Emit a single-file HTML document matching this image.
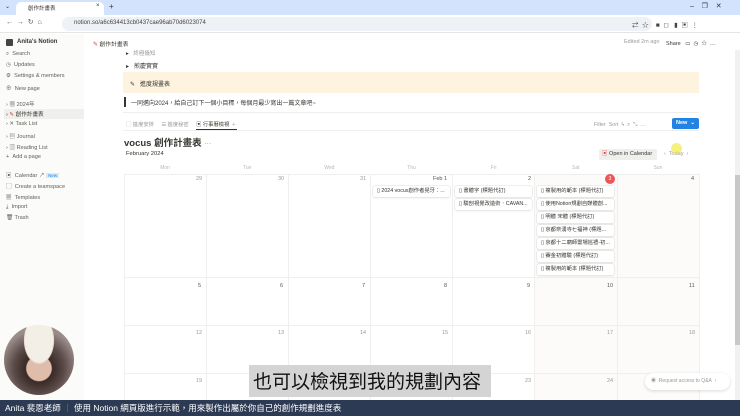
<!DOCTYPE html><html><head><meta charset="utf-8"><style>
*{box-sizing:border-box;margin:0;padding:0}
body{width:740px;height:416px;overflow:hidden;background:#fff;font-family:"Liberation Sans","Noto Sans CJK TC",sans-serif;color:#37352f;position:relative;font-size:6px}
.a{position:absolute}
.g{color:#9b9a97}
.card{position:absolute;height:11px;background:#fff;box-shadow:0 0 0 0.5px #ddd,0 1px 2px rgba(0,0,0,.08);border-radius:2px;font-size:5.3px;line-height:11px;padding-left:4px;white-space:nowrap;overflow:hidden;width:77px}
.num{position:absolute;font-size:5.5px;color:#9b9a97}
.sb{position:absolute;left:6px;font-size:5.6px;color:#5f5e5b}
.vl{position:absolute;top:174px;width:1px;height:226px;background:#efefed}
.hl{position:absolute;left:124px;width:575px;height:1px;background:#efefed}
</style></head><body>
<div class="a" style="left:0;top:0;width:740px;height:15px;background:#d3e3fd"></div>
<div class="a" style="left:16px;top:2px;width:88px;height:13px;background:#fff;border-radius:5px 5px 0 0"></div>
<div class="a" style="left:28px;top:4px;font-size:5.5px">創作計畫表</div>
<div class="a" style="left:96px;top:3px;font-size:6px">×</div>
<div class="a" style="left:109px;top:2px;font-size:8px">+</div>
<div class="a" style="left:5px;top:3px;font-size:6px">⌄</div>
<div class="a" style="left:690px;top:2px;font-size:7px">–&nbsp;&nbsp;&nbsp;&nbsp;❐&nbsp;&nbsp;&nbsp;&nbsp;✕</div>
<div class="a" style="left:0;top:15px;width:740px;height:18px;background:#fff;border-bottom:1px solid #e5e5e5"></div>
<div class="a" style="left:6px;top:18px;font-size:7px;color:#555">←&nbsp;&nbsp;→&nbsp;&nbsp;↻&nbsp;&nbsp;⌂</div>
<div class="a" style="left:62px;top:17px;width:590px;height:14px;background:#eef1f6;border-radius:7px"></div>
<div class="a" style="left:74px;top:20px;font-size:6px;color:#444">notion.so/a6c634413cb0437cae96ab70d6023074</div>
<div class="a" style="left:632px;top:19px;font-size:6.5px;color:#444">⇄&nbsp;&nbsp;☆&nbsp;&nbsp;&nbsp;&nbsp;■&nbsp;&nbsp;◻&nbsp;&nbsp;&nbsp;▮&nbsp;&nbsp;▣&nbsp;&nbsp;⋮</div>
<div class="a" style="left:0;top:34px;width:84px;height:366px;background:#fbfbfa"></div>
<div class="a" style="left:6px;top:39px;width:7px;height:7px;background:#444;border-radius:1px"></div>
<div class="a" style="left:17px;top:39px;font-size:6px;font-weight:bold">Anita's Notion</div>
<div class="sb" style="top:51px">⌕ &nbsp;Search</div>
<div class="sb" style="top:62px">◷ &nbsp;Updates</div>
<div class="sb" style="top:73px">⚙ &nbsp;Settings &amp; members</div>
<div class="sb" style="top:84px">⊕ &nbsp;New page</div>
<div class="sb" style="top:100px">› ▦ 2024年</div>
<div class="a" style="left:4px;top:109px;width:80px;height:10px;background:#efefed"></div>
<div class="sb" style="top:110px;color:#37352f">› <span style="color:#c44">✎</span> 創作計畫表</div>
<div class="sb" style="top:121px">› ✕ Task List</div>
<div class="sb" style="top:132px">› ▤ Journal</div>
<div class="sb" style="top:143px">› ▥ Reading List</div>
<div class="sb" style="top:154px">+ &nbsp;Add a page</div>
<div class="sb" style="top:171px">▣ &nbsp;Calendar ↗ <span style="background:#ddebf1;color:#2383e2;font-size:4.5px;padding:0 2px">New</span></div>
<div class="sb" style="top:182px">▢ &nbsp;Create a teamspace</div>
<div class="sb" style="top:193px">▦ &nbsp;Templates</div>
<div class="sb" style="top:204px">⤓ &nbsp;Import</div>
<div class="sb" style="top:215px">🗑 Trash</div>
<div class="a" style="left:93px;top:39px;font-size:5.8px"><span style="color:#c44">✎</span> 創作計畫表</div>
<div class="a g" style="left:624px;top:39px;font-size:5.5px">Edited 2m ago</div>
<div class="a" style="left:666px;top:39px;font-size:5.5px">Share&nbsp;&nbsp;&nbsp;▭&nbsp;&nbsp;◷&nbsp;&nbsp;☆&nbsp;&nbsp;⋯</div>
<div class="a" style="left:735px;top:50px;width:5px;height:350px;background:#f1f1f1"></div>
<div class="a" style="left:735px;top:175px;width:5px;height:170px;background:#c9c9c9"></div>
<div class="a" style="left:126px;top:49px;font-size:5.5px">▸&nbsp;&nbsp; <span class="g">終極儀知</span></div>
<div class="a" style="left:126px;top:61px;font-size:6px">▸&nbsp;&nbsp; 煎慶實實</div>
<div class="a" style="left:123px;top:72px;width:576px;height:21px;background:#fdf3df"></div>
<div class="a" style="left:130px;top:79px;font-size:6px">✎&nbsp;&nbsp; 進度規畫表</div>
<div class="a" style="left:124px;top:97px;width:2px;height:10px;background:#37352f"></div>
<div class="a" style="left:131px;top:98px;font-size:6px">一同邁向2024，給自己訂下一個小目標，每個月最少寫出一篇文章吧~</div>
<div class="a" style="left:123px;top:112px;width:576px;height:1px;background:#eee"></div>
<div class="a g" style="left:126px;top:120px;font-size:5.3px">▢ 進度安排&nbsp;&nbsp;&nbsp;&nbsp;&nbsp;☰ 進度秘密&nbsp;&nbsp;&nbsp;&nbsp;&nbsp;<span style="color:#37352f">▣ 行事曆檢視</span>&nbsp;&nbsp;+</div>
<div class="a" style="left:196px;top:129px;width:41px;height:1.5px;background:#37352f"></div>
<div class="a" style="left:123px;top:130px;width:576px;height:1px;background:#eee"></div>
<div class="a g" style="left:594px;top:120px;font-size:5.3px">Filter&nbsp; Sort&nbsp; ϟ&nbsp; ⌕&nbsp; ⤡&nbsp; ⋯</div>
<div class="a" style="left:672px;top:118px;width:27px;height:11px;background:#2383e2;border-radius:2px;color:#fff;font-size:5.5px;font-weight:bold;line-height:11px;padding-left:4px">New&nbsp;&nbsp;⌄</div>
<div class="a" style="left:124px;top:135px;font-size:9.5px;font-weight:bold">vocus 創作計畫表 <span class="g" style="font-weight:normal;font-size:7px">⋯</span></div>
<div class="a" style="left:126px;top:151px;font-size:5.8px">February 2024</div>
<div class="a" style="left:599px;top:149px;width:58px;height:11px;background:#efefed;border-radius:2px;font-size:5.5px;line-height:11px;padding-left:3px"><span style="color:#e03e3e">▣</span> Open in Calendar</div>
<div class="a g" style="left:664px;top:151px;font-size:5.5px">‹&nbsp; Today&nbsp; ›</div>
<div class="a" style="left:671px;top:143px;width:11px;height:11px;border-radius:50%;background:rgba(240,230,40,.6)"></div>
<div class="a" style="left:534px;top:174px;width:165px;height:226px;background:#fcfbf9"></div>
<div class="hl" style="top:174px"></div><div class="hl" style="top:277px"></div><div class="hl" style="top:325px"></div><div class="hl" style="top:373px"></div>
<div class="vl" style="left:124px"></div><div class="vl" style="left:206px"></div><div class="vl" style="left:288px"></div><div class="vl" style="left:370px"></div><div class="vl" style="left:452px"></div><div class="vl" style="left:534px"></div><div class="vl" style="left:617px"></div><div class="vl" style="left:699px"></div>
<div class="a g" style="left:124px;top:165px;width:575px;font-size:5px;display:flex;opacity:.7"><span style="flex:1;text-align:center">Mon</span><span style="flex:1;text-align:center">Tue</span><span style="flex:1;text-align:center">Wed</span><span style="flex:1;text-align:center">Thu</span><span style="flex:1;text-align:center">Fri</span><span style="flex:1;text-align:center">Sat</span><span style="flex:1;text-align:center">Sun</span></div>
<div class="num" style="left:196px;top:176px">29</div><div class="num" style="left:278px;top:176px">30</div><div class="num" style="left:360px;top:176px">31</div>
<div class="num" style="left:433px;top:176px;color:#555">Feb 1</div><div class="num" style="left:528px;top:176px;color:#555">2</div>
<div class="a" style="left:605px;top:174px;width:10px;height:10px;border-radius:50%;background:#eb5757;color:#fff;font-size:5px;text-align:center;line-height:10px">3</div>
<div class="num" style="left:691px;top:176px;color:#555">4</div>
<div class="num" style="left:198px;top:283px;color:#555">5</div><div class="num" style="left:280px;top:283px;color:#555">6</div><div class="num" style="left:362px;top:283px;color:#555">7</div><div class="num" style="left:444px;top:283px;color:#555">8</div><div class="num" style="left:527px;top:283px;color:#555">9</div><div class="num" style="left:607px;top:283px;color:#555">10</div><div class="num" style="left:689px;top:283px;color:#555">11</div>
<div class="num" style="left:196px;top:330px">12</div><div class="num" style="left:278px;top:330px">13</div><div class="num" style="left:360px;top:330px">14</div><div class="num" style="left:442px;top:330px">15</div><div class="num" style="left:525px;top:330px">16</div><div class="num" style="left:607px;top:330px">17</div><div class="num" style="left:689px;top:330px">18</div>
<div class="num" style="left:196px;top:378px">19</div><div class="num" style="left:525px;top:378px">23</div><div class="num" style="left:607px;top:378px">24</div>
<div class="card" style="left:373px;top:186px">▯ 2024 vocus創作者晃牙：...</div>
<div class="card" style="left:455px;top:186px">▯ 書體字 (標題代訂)</div>
<div class="card" style="left:455px;top:199px">▯ 驗剖視覺改造術．CAVAN...</div>
<div class="card" style="left:537px;top:186px">▯ 複製用的範本 (標題代訂)</div>
<div class="card" style="left:537px;top:199px">▯ 使用Notion規劃自媒體創...</div>
<div class="card" style="left:537px;top:212px">▯ 明體 宋體 (標題代訂)</div>
<div class="card" style="left:537px;top:225px">▯ 京都奈湧寺七福神 (標題...</div>
<div class="card" style="left:537px;top:238px">▯ 京都十二廟師靈場巡禮-初...</div>
<div class="card" style="left:537px;top:251px">▯ 賽金初體驗 (標題代訂)</div>
<div class="card" style="left:537px;top:264px">▯ 複製用的範本 (標題代訂)</div>
<div class="a" style="left:645px;top:373px;width:85px;height:17px;background:#fff;border-radius:9px;box-shadow:0 1px 3px rgba(0,0,0,.15);font-size:5px;line-height:17px;padding-left:6px;color:#9b9a97">◉&nbsp; Request access to Q&amp;A&nbsp; ›</div>
<div class="a" style="left:4px;top:325px;width:70px;height:70px;border-radius:50%;background:radial-gradient(ellipse at 50% 22%,#f3eee6 0 28%,#e6d6c8 30%,transparent 31%),radial-gradient(circle at 50% 62%,#e0bcaa 0 22%,#3a2a26 24%,#5a4a48 45%,#9a8c88 70%)"></div>
<div class="a" style="left:249px;top:365px;width:242px;height:32px;background:#d4d4d4"></div>
<div class="a" style="left:253px;top:367px;font-size:19px;color:#111;font-family:'Noto Sans CJK TC',sans-serif;line-height:28px">也可以檢視到我的規劃內容</div>
<div class="a" style="left:0;top:400px;width:740px;height:16px;background:#2c3b53"></div>
<div class="a" style="left:5px;top:402px;font-size:8.5px;color:#fff;line-height:12px">Anita 裴恩老師 <span style="color:#8a97aa">｜</span> 使用 Notion 網頁版進行示範，用來製作出屬於你自己的創作規劃進度表</div>
</body></html>
